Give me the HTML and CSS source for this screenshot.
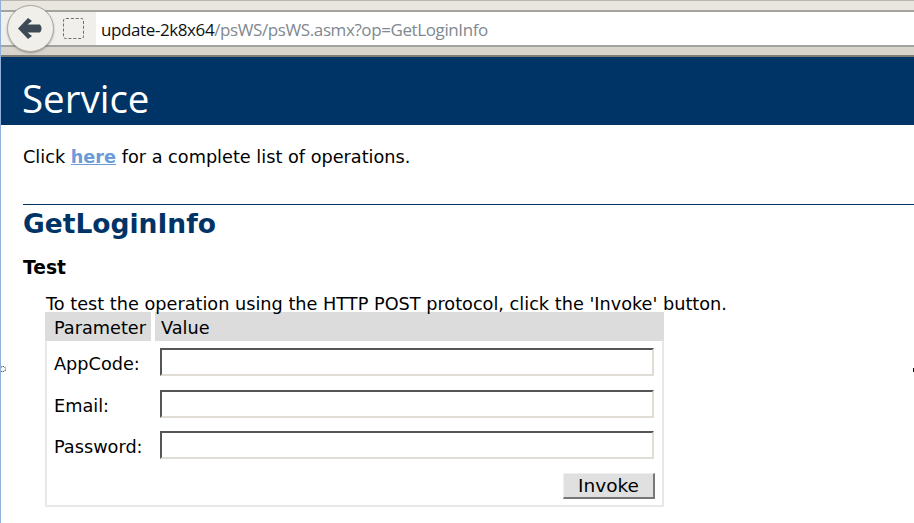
FILE: index.html
```html
<!DOCTYPE html>
<html lang="en">
<head>
    <meta charset="UTF-8">
    <title>psWS Service</title>
    <link rel="stylesheet" href="styles.css">
</head>
<body>

<div class="browser-bar">
    <div class="back-button">
        <svg width="25" height="21" viewBox="0 0 25 21">
            <path d="M0 10.500 L10 0 L14 3 L9.500 6.500 L22 6.500 Q25 10.500 22 14.500 L9.500 14.500 L14 18 L10 21 Z" fill="#3d4a56"/>
        </svg>
    </div>
    <div class="url-row">
        <div class="page-icon-box"><div class="page-icon"></div></div>
        <div class="url-text">update-2k8x64<span class="url-path">/psWS/psWS.asmx?op=GetLoginInfo</span></div>
    </div>
</div>

<header>
    <h1>Service</h1>
</header>

<div class="content">
    <p class="intro">Click <a href="#">here</a> for a complete list of operations.</p>

    <h2>GetLoginInfo</h2>
    <h3>Test</h3>

    <div class="test-box">
        <p class="test-note">To test the operation using the HTTP POST protocol, click the 'Invoke' button.</p>
        <table class="test-form">
            <tr>
                <th class="col-param">Parameter</th>
                <th class="col-value">Value</th>
            </tr>
            <tr class="row-first">
                <td class="label">AppCode:</td>
                <td><input type="text"></td>
            </tr>
            <tr>
                <td class="label">Email:</td>
                <td><input type="text"></td>
            </tr>
            <tr>
                <td class="label">Password:</td>
                <td><input type="text"></td>
            </tr>
            <tr class="row-button">
                <td></td>
                <td class="button-cell"><button type="button">Invoke</button></td>
            </tr>
        </table>
    </div>
</div>

<!-- window resize cursor bits caught in the screenshot -->
<div class="cursor-left"></div>
<div class="cursor-right"></div>

</body>
</html>
```

FILE: styles.css
```css
html, body {
    margin: 0;
    padding: 0;
}
body {
    position: relative;
    height: 523px;
    overflow: hidden;
    background-color: white;
    border-left: 1px solid #8fb0d8;
    box-sizing: border-box;
    font-family: "DejaVu Sans", Verdana, sans-serif;
    font-size: 17.7px;
    color: #000;
}

/* Browser chrome */
.browser-bar {
    position: relative;
    height: 57px;
    box-sizing: border-box;
    padding-top: 10px;
    background-color: #d8d3cb;
    border-bottom: 2px solid #7d7d78;
}
.browser-bar::before {
    content: "";
    position: absolute;
    left: 0;
    right: 0;
    top: 0;
    height: 10px;
    background-color: #e9e6e0;
    border-top: 1px solid #b9b7b2;
    box-sizing: border-box;
}
.url-row {
    position: relative;
    display: flex;
    height: 37px;
    box-sizing: border-box;
    background-color: white;
    border-top: 2px solid #a3a3a0;
    border-bottom: 2px solid #a3a3a0;
}
.page-icon-box {
    width: 95px;
    padding-left: 62px;
    box-sizing: border-box;
    background-color: #f1efeb;
    display: flex;
    align-items: center;
}
.page-icon {
    width: 21px;
    height: 21px;
    box-sizing: border-box;
    border: 1px dashed #6f6f6f;
    border-radius: 3px;
}
.url-text {
    padding-left: 5px;
    font-family: "Open Sans", sans-serif;
    font-size: 17px;
    line-height: 36px;
    letter-spacing: -0.4px;
    color: #111;
}
.url-path {
    color: #808890;
}
.back-button {
    position: absolute;
    z-index: 1;
    left: 6px;
    top: 5px;
    width: 47px;
    height: 47px;
    box-sizing: border-box;
    border: 1px solid #a9a79f;
    border-radius: 50%;
    background-color: #f1efe9;
    box-shadow: 0 1px 2px rgba(0, 0, 0, 0.3);
    display: flex;
    align-items: center;
    justify-content: center;
}

/* Page */
header {
    height: 68px;
    margin-left: -1px;
    padding-left: 22px;
    background-color: #003366;
}
h1 {
    margin: 0;
    font-family: "Open Sans", sans-serif;
    font-weight: normal;
    font-size: 38.5px;
    line-height: 83px;
    color: white;
}
.content {
    padding-left: 22px;
}
.intro {
    margin: 0;
    padding-top: 21px;
    height: 58px;
    line-height: 22px;
}
.intro a {
    color: #6b9bd8;
    font-weight: bold;
}
h2 {
    margin: 0;
    padding-top: 3px;
    border-top: 1px solid #003366;
    height: 48px;
    font-size: 26.5px;
    line-height: 32px;
    color: #003366;
}
h3 {
    margin: 0;
    height: 37px;
    font-size: 18.7px;
    line-height: 24px;
}
.test-box {
    padding-left: 22px;
}
.test-note {
    margin: 0;
    height: 19px;
    padding-left: 1px;
    line-height: 22px;
    white-space: nowrap;
}
.test-form {
    width: 619px;
    border-collapse: separate;
    border-spacing: 0;
    table-layout: fixed;
}
.test-form th {
    height: 29px;
    padding: 2px 0 0 7px;
    box-sizing: border-box;
    background-color: #dcdcdc;
    font-weight: normal;
    text-align: left;
}
.test-form .col-param {
    padding-left: 9px;
    border-right: 4px solid white;
    box-sizing: content-box;
    width: 97px;
    height: 27px;
}
.test-form .col-value {
    padding-left: 6px;
}
.test-form td {
    height: 41px;
    box-sizing: border-box;
    padding: 7px 0 0 5px;
    vertical-align: top;
    line-height: 22px;
    border-right: 2px solid #e8e8e8;
}
.test-form td.label, .test-form .row-button td:first-child {
    border-right: 0;
    border-left: 2px solid #e8e8e8;
}
.test-form .row-first td {
    height: 42px;
}
.test-form .row-button td {
    height: 42px;
    padding-top: 8px;
    border-bottom: 2px solid #e8e8e8;
}
.test-form .label {
    padding: 11.500px 0 0 7px;
}
input {
    display: block;
    width: 494px;
    height: 28px;
    box-sizing: border-box;
    margin: 0;
    padding: 0;
    background-color: white;
    border-style: solid;
    border-width: 2px;
    border-color: #555 #e0dcd6 #e0dcd6 #555;
}
.button-cell {
    text-align: right;
}
button {
    display: inline-block;
    vertical-align: top;
    width: 92px;
    height: 26px;
    margin-right: 7px;
    padding: 0;
    font-family: "DejaVu Sans", Verdana, sans-serif;
    font-size: 18.5px;
    background-color: #e0e0e0;
    border-style: solid;
    border-width: 1px 2px 2px 1px;
    border-color: #efefef #777 #777 #efefef;
}

.cursor-left {
    position: absolute;
    left: -1px;
    top: 366px;
    width: 6px;
    height: 6px;
    box-sizing: border-box;
    border: 1px dotted #222;
    border-radius: 50%;
}
.cursor-right {
    position: absolute;
    left: 912px;
    top: 368px;
    width: 2px;
    height: 4px;
    background-color: #111;
}
```
